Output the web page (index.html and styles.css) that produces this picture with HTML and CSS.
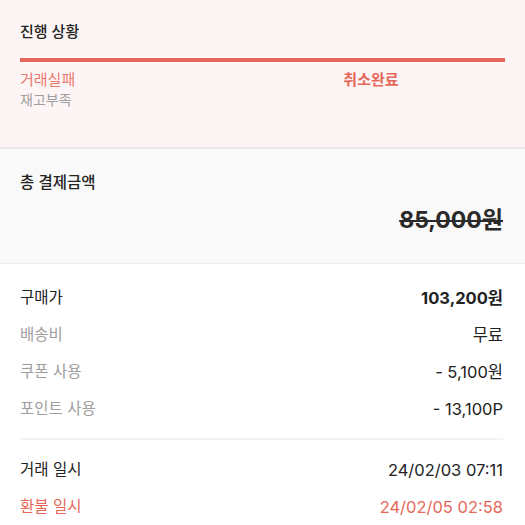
FILE: index.html
```html
<!DOCTYPE html>
<html lang="ko">
<head>
    <meta charset="UTF-8">
    <meta name="viewport" content="width=device-width, initial-scale=1.0">
    <title>거래 상세</title>
    <link rel="stylesheet" href="styles.css">
</head>
<body>
    <section class="progress">
        <h2 class="section-title">진행 상황</h2>
        <div class="progress-bar"></div>
        <div class="steps">
            <div class="step">
                <p class="step-name">거래실패</p>
                <p class="step-desc">재고부족</p>
            </div>
            <div class="step">
                <p class="step-name active">취소완료</p>
            </div>
        </div>
    </section>

    <section class="total">
        <h2 class="section-title">총 결제금액</h2>
        <p class="total-price">85,000원</p>
    </section>

    <section class="details">
        <div class="row">
            <span class="label dark">구매가</span>
            <span class="value strong">103,200원</span>
        </div>
        <div class="row">
            <span class="label">배송비</span>
            <span class="value">무료</span>
        </div>
        <div class="row">
            <span class="label">쿠폰 사용</span>
            <span class="value">- 5,100원</span>
        </div>
        <div class="row">
            <span class="label">포인트 사용</span>
            <span class="value">- 13,100P</span>
        </div>

        <hr class="divider">

        <div class="row">
            <span class="label dark">거래 일시</span>
            <span class="value">24/02/03 07:11</span>
        </div>
        <div class="row refund">
            <span class="label">환불 일시</span>
            <span class="value">24/02/05 02:58</span>
        </div>
    </section>
</body>
</html>
```

FILE: styles.css
```css
* {
    margin: 0;
    padding: 0;
    box-sizing: border-box;
    font-family: Inter, 'Noto Sans CJK KR', sans-serif;
}

:root {
    --red: #e5675a;
    --red-light: #e9796d;
    --text: #222222;
    --gray: #9e9e9e;
}

body {
    background-color: #ffffff;
    color: var(--text);
    width: 525px;
}

.section-title {
    font-size: 15px;
    line-height: 22px;
    font-weight: 500;
    color: var(--text);
}

/* progress */
.progress {
    background-color: #fdf5f5;
    padding: 21px 20px 37px;
    border-bottom: 2px solid #eeeaea;
}

.progress-bar {
    height: 4px;
    margin-top: 15px;
    background-color: var(--red);
}

.steps {
    display: grid;
    grid-template-columns: 2fr 1fr;
    margin-top: 8px;
}

.step-name {
    font-size: 15px;
    line-height: 20px;
    color: var(--red-light);
}

.step-name.active {
    color: var(--red);
    font-weight: 700;
}

.step-desc {
    font-size: 14px;
    line-height: 20px;
    color: var(--gray);
}

/* total */
.total {
    background-color: #f9f9f9;
    padding: 23px 22px 28px 20px;
    border-bottom: 1px solid #ececec;
}

.total .section-title {
    font-size: 15.5px;
}

.total-price {
    margin-top: 11px;
    text-align: right;
    font-size: 23px;
    line-height: 30px;
    font-weight: 700;
    color: #2a2a2a;
    text-decoration: line-through;
    text-decoration-thickness: 2px;
}

/* details */
.details {
    padding: 23px 22px 0 20px;
}

.row {
    display: flex;
    justify-content: space-between;
    align-items: center;
    height: 22px;
    font-size: 15.5px;
    line-height: 22px;
}

.row + .row {
    height: 37px;
    padding-top: 15px;
}

.label {
    color: var(--gray);
}

.label.dark {
    color: var(--text);
}

.value {
    font-size: 16.5px;
    color: var(--text);
}

.value.strong {
    font-weight: 700;
}

.refund .label,
.refund .value {
    color: var(--red);
}

.divider {
    border: none;
    height: 2px;
    background-color: #f3f3f3;
    margin: 18px 0 19px;
}

.divider + .row {
    height: 22px;
    padding-top: 0;
}
```
